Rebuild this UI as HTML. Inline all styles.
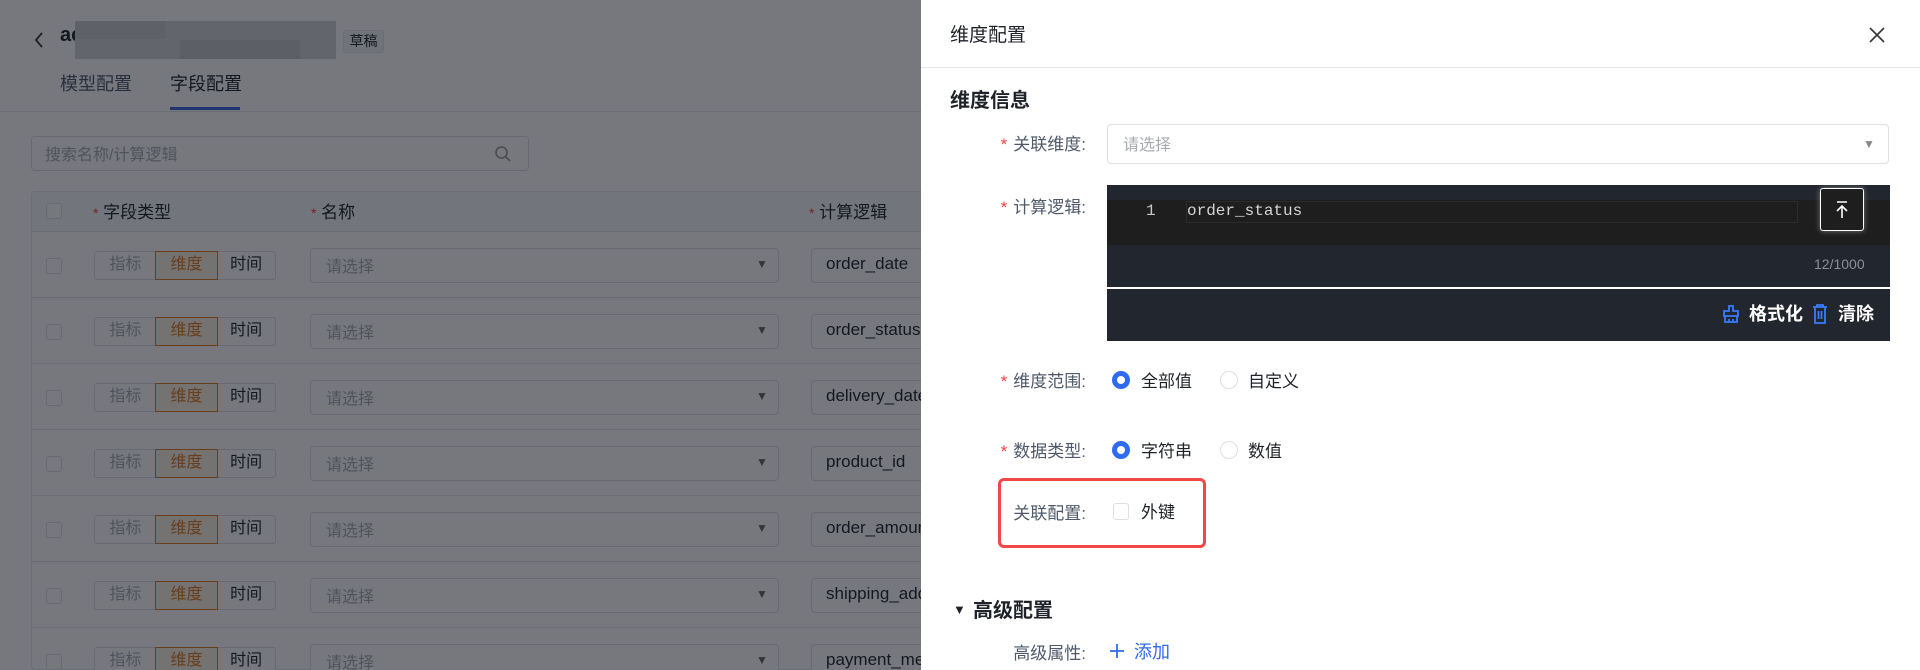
<!DOCTYPE html>
<html style="height:670px;overflow:hidden"><head><meta charset="utf-8"><style>
*{box-sizing:border-box;margin:0;padding:0}
body{width:1920px;height:670px;overflow:hidden;position:relative;font-family:"Liberation Sans","Noto Sans CJK SC",sans-serif;background:#fff;color:#1f2329}
.a{position:absolute}
.t{font-size:17px;white-space:nowrap;margin-top:-4px}
.ov{position:absolute;left:0;top:0;width:921px;height:670px;background:rgba(10,14,25,0.56)}
.seg{position:absolute;height:29px;border:1px solid #dcdfe6;border-radius:3px;background:#fff;display:flex;font-size:16px}
.seg span{display:block;text-align:center;line-height:26px}
.sel{position:absolute;height:35px;border:1px solid #dcdfe6;border-radius:4px;background:#fff}
.lbl{position:absolute;font-size:17px;color:#4e5969;text-align:right;width:140px;white-space:nowrap;margin-top:-4px}
.lbl b{color:#f53f3f;font-weight:normal;margin-right:6px}
.radio{position:absolute;width:18px;height:18px;border-radius:50%;border:1px solid #dcdfe6;background:#fff}
.radio.on{border:5px solid #2f6bef}
</style></head><body>
<div class="a" style="left:0;top:0;width:921px;height:112px;background:#fff;border-bottom:1px solid #e5e6eb"></div>
<svg class="a" style="left:33px;top:31px" width="12" height="18" viewBox="0 0 12 18"><path d="M9 2L3 9L9 16" stroke="#333" stroke-width="1.8" fill="none"/></svg>
<div class="a t" style="left:60px;top:28px;font-size:20px;font-weight:bold">ac</div>
<div class="a" style="left:75px;top:21px;width:261px;height:38px;background:#d3d4d8"></div>
<div class="a" style="left:75px;top:21px;width:90px;height:18px;background:#cacbcf"></div>
<div class="a" style="left:180px;top:40px;width:120px;height:19px;background:#c6c7cb"></div>
<div class="a t" style="left:343px;top:30px;width:41px;height:23px;background:#f2f3f5;border:1px solid #e5e6eb;border-radius:3px;font-size:14px;text-align:center;line-height:21px;margin-top:0">草稿</div>
<div class="a t" style="left:60px;top:74px;font-size:18px;color:#4e5969">模型配置</div>
<div class="a t" style="left:170px;top:74px;font-size:18px">字段配置</div>
<div class="a" style="left:170px;top:107px;width:70px;height:3px;background:#3668e0"></div>
<div class="a" style="left:31px;top:136px;width:498px;height:35px;background:#fff;border:1px solid #dcdfe6;border-radius:4px"></div>
<div class="a t" style="left:45px;top:145px;font-size:16px;color:#a8abb2">搜索名称/计算逻辑</div>
<svg class="a" style="left:494px;top:145px" width="18" height="18" viewBox="0 0 18 18"><circle cx="7.5" cy="7.5" r="5.5" fill="none" stroke="#999" stroke-width="1.6"/><path d="M11.5 11.5L16 16" stroke="#999" stroke-width="1.6"/></svg>
<div class="a" style="left:31px;top:191px;width:900px;height:479px;background:#fff;border:1px solid #e5e6eb;border-radius:4px"></div>
<div class="a" style="left:32px;top:192px;width:889px;height:40px;background:#f7f8fa;border-bottom:1px solid #e5e6eb"></div>
<div class="a" style="left:46px;top:203px;width:16px;height:16px;border:1px solid #dcdfe6;border-radius:3px;background:#fff"></div>
<div class="a t" style="left:93px;top:202px"><span style="color:#f53f3f;font-size:14px">*</span> 字段类型</div>
<div class="a t" style="left:311px;top:202px"><span style="color:#f53f3f;font-size:14px">*</span> 名称</div>
<div class="a t" style="left:809px;top:202px"><span style="color:#f53f3f;font-size:14px">*</span> 计算逻辑</div>
<div id="rows"></div>
<script>
var n=["order_date","order_status","delivery_date","product_id","order_amount","shipping_address","payment_method"],h="";
n.forEach(function(s,i){var y=232+i*66;
h+='<div class="a" style="left:32px;top:'+(y+65)+'px;width:889px;height:1px;background:#e5e6eb"></div>';
h+='<div class="a" style="left:46px;top:'+(y+26)+'px;width:16px;height:16px;border:1px solid #dcdfe6;border-radius:3px;background:#fff"></div>';
h+='<div class="seg" style="left:94px;top:'+(y+19)+'px;width:182px"><span style="width:61px;color:#a8abb2">指标</span><span style="width:62px;color:#e07a1f;background:#fdf1e4;outline:1px solid #e07a1f">维度</span><span style="width:58px">时间</span></div>';
h+='<div class="sel" style="left:310px;top:'+(y+16)+'px;width:469px"><span class="a t" style="left:15px;top:8px;font-size:16px;color:#a8abb2">请选择</span><span class="a" style="left:445px;top:8px;font-size:12px;color:#666">&#9660;</span></div>';
h+='<div class="sel" style="left:811px;top:'+(y+16)+'px;width:200px"><span class="a t" style="left:14px;top:9px;font-size:17px">'+s+'</span></div>';});
document.getElementById('rows').innerHTML=h;
</script>
<div class="ov"></div>
<div class="a" style="left:921px;top:0;width:999px;height:670px;background:#fff"></div>
<div class="a" style="left:921px;top:67px;width:999px;height:1px;background:#e5e6eb"></div>
<div class="a t" style="left:950px;top:24px;font-size:19px">维度配置</div>
<svg class="a" style="left:1867px;top:25px" width="20" height="20" viewBox="0 0 20 20"><path d="M3 3L17 17M17 3L3 17" stroke="#333" stroke-width="1.6"/></svg>
<div class="a t" style="left:950px;top:88px;font-size:20px;font-weight:bold">维度信息</div>
<div class="lbl" style="left:946px;top:134px"><b>*</b>关联维度:</div>
<div class="sel" style="left:1107px;top:124px;width:782px;height:40px"><span class="a t" style="left:15px;top:10px;font-size:16px;color:#a8abb2">请选择</span><span class="a" style="left:755px;top:12px;font-size:12px;color:#888">&#9660;</span></div>
<div class="lbl" style="left:946px;top:197px"><b>*</b>计算逻辑:</div>
<div class="a" style="left:1107px;top:185px;width:783px;height:156px;background:#22262e"></div>
<div class="a" style="left:1107px;top:200px;width:783px;height:45px;background:#1e1e1e"></div>
<div class="a" style="left:1186px;top:201px;width:612px;height:22px;border:1px solid #2c2c2c"></div>
<div class="a" style="left:1146px;top:202px;font-family:'Liberation Mono',monospace;font-size:16px;color:#c8c8c8">1</div>
<div class="a" style="left:1187px;top:202px;font-family:'Liberation Mono',monospace;font-size:16px;color:#d4d4d4">order_status</div>
<div class="a" style="left:1820px;top:188px;width:44px;height:43px;background:#1e1e1e;border:1.5px solid #fff;border-radius:3px;box-shadow:0 0 6px rgba(255,255,255,0.4)"></div>
<svg class="a" style="left:1832px;top:200px" width="20" height="20" viewBox="0 0 20 20"><path d="M5 2H15M10 18V6M5 11L10 6L15 11" stroke="#fff" stroke-width="1.6" fill="none"/></svg>
<div class="a t" style="left:1814px;top:260px;font-size:14px;color:#8a8f99">12/1000</div>
<div class="a" style="left:1107px;top:287px;width:783px;height:2px;background:#fff"></div>
<svg class="a" style="left:1722px;top:304px" width="18" height="20" viewBox="0 0 18 20"><path d="M7 2H11V7H16V12H2V7H7Z M3 12V18H15V12 M7 18V15 M11 18V15" stroke="#3a7bff" stroke-width="1.8" fill="none"/></svg>
<div class="a t" style="left:1749px;top:304px;font-size:18px;color:#fff;font-weight:bold">格式化</div>
<svg class="a" style="left:1812px;top:304px" width="16" height="20" viewBox="0 0 16 20"><path d="M1 3H15M5 3V1H11V3M3 3V19H13V3M6.5 7V15M9.5 7V15" stroke="#3a7bff" stroke-width="1.8" fill="none"/></svg>
<div class="a t" style="left:1838px;top:304px;font-size:18px;color:#fff;font-weight:bold">清除</div>
<div class="lbl" style="left:946px;top:371px"><b>*</b>维度范围:</div>
<div class="radio on" style="left:1112px;top:371px"></div><div class="a t" style="left:1141px;top:371px">全部值</div>
<div class="radio" style="left:1220px;top:371px"></div><div class="a t" style="left:1248px;top:371px">自定义</div>
<div class="lbl" style="left:946px;top:441px"><b>*</b>数据类型:</div>
<div class="radio on" style="left:1112px;top:441px"></div><div class="a t" style="left:1141px;top:441px">字符串</div>
<div class="radio" style="left:1220px;top:441px"></div><div class="a t" style="left:1248px;top:441px">数值</div>
<div class="a" style="left:998px;top:478px;width:208px;height:70px;border:3.5px solid #f04848;border-radius:6px"></div>
<div class="lbl" style="left:946px;top:503px">关联配置:</div>
<div class="a" style="left:1113px;top:503px;width:16px;height:17px;border:1px solid #dcdfe6;border-radius:3px"></div>
<div class="a t" style="left:1141px;top:502px">外键</div>
<div class="a" style="left:953px;top:602px;font-size:13px">&#9660;</div>
<div class="a t" style="left:973px;top:598px;font-size:20px;font-weight:bold">高级配置</div>
<div class="lbl" style="left:946px;top:643px">高级属性:</div>
<svg class="a" style="left:1109px;top:643px" width="16" height="16" viewBox="0 0 16 16"><path d="M8 1V15M1 8H15" stroke="#2f6bef" stroke-width="1.8"/></svg>
<div class="a t" style="left:1134px;top:642px;font-size:18px;color:#2f6bef">添加</div>
</body></html>
